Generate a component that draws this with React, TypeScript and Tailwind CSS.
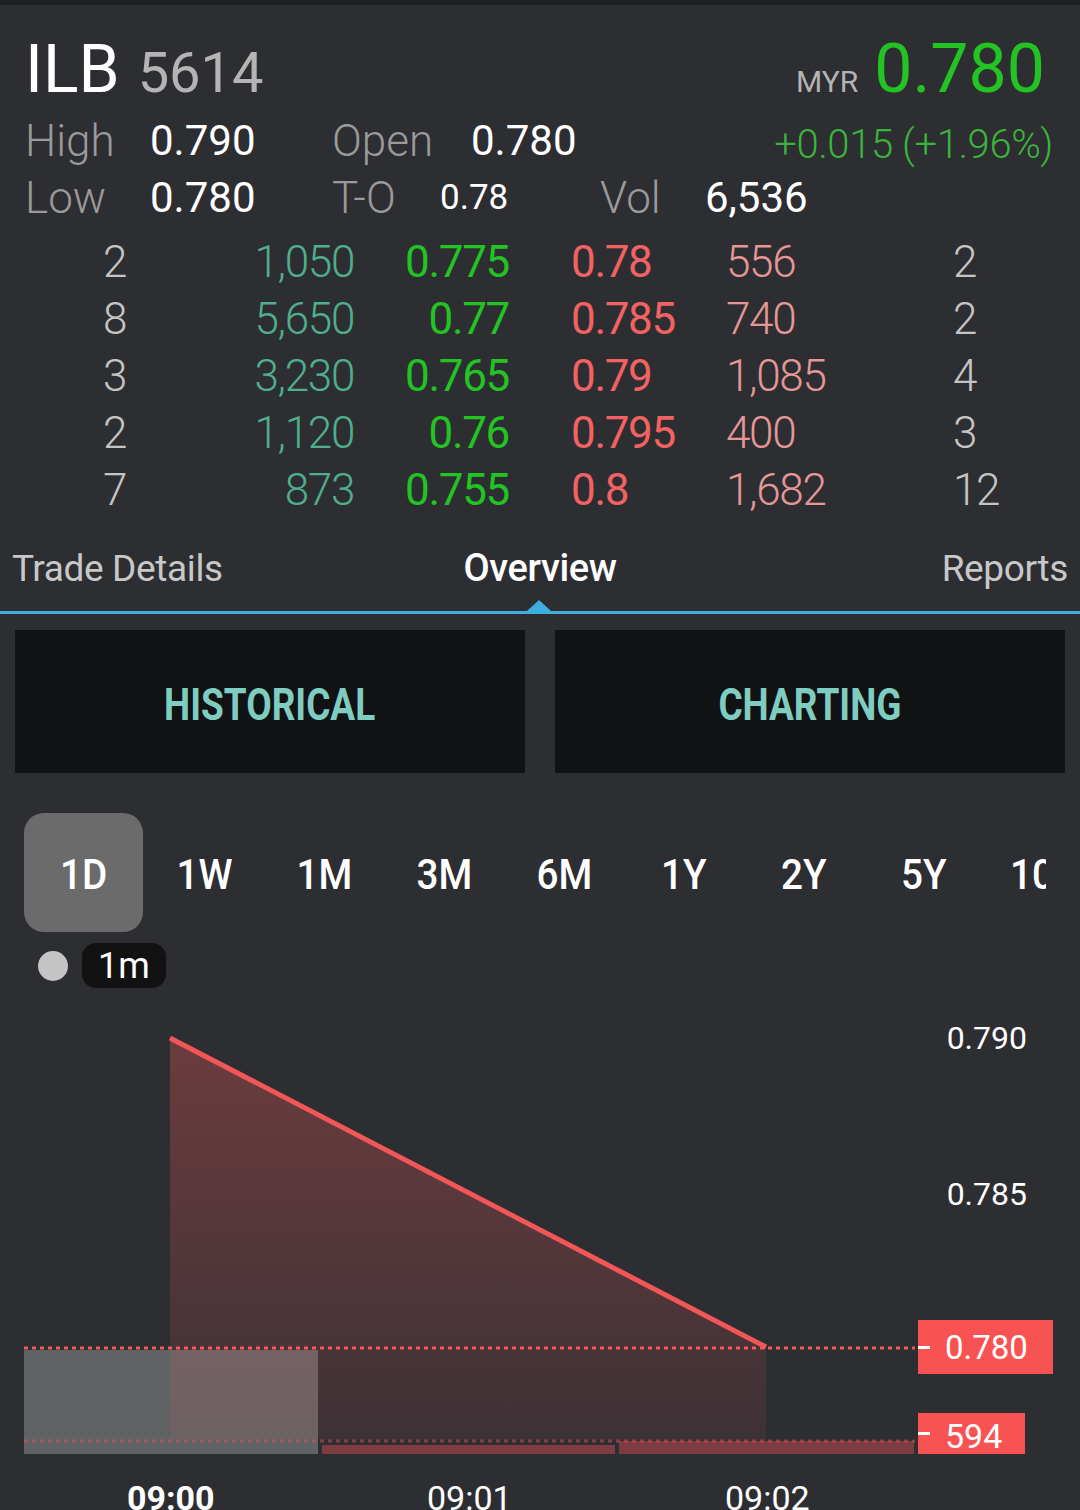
import React from "react"

const font = { fontFamily: "Roboto, 'Noto Sans', sans-serif" }

const book = [
  ["2", "1,050", "0.775", "0.78", "556", "2"],
  ["8", "5,650", "0.77", "0.785", "740", "2"],
  ["3", "3,230", "0.765", "0.79", "1,085", "4"],
  ["2", "1,120", "0.76", "0.795", "400", "3"],
  ["7", "873", "0.755", "0.8", "1,682", "12"],
]

const periods = ["1D", "1W", "1M", "3M", "6M", "1Y", "2Y", "5Y", "10Y"]

function Header() {
  return (
    <div className="pl-[25px] pr-[27px]">
      <div className="flex h-[107px] items-end justify-between pb-[9px] pr-[8px]">
        <div className="flex items-baseline gap-[18px]">
          <span className="text-[66px] leading-none text-white">ILB</span>
          <span className="text-[56px] leading-none text-[#b4b4b4]">5614</span>
        </div>
        <div className="flex items-baseline gap-[16px]">
          <span className="text-[30px] leading-none text-[#b4b4b4]">MYR</span>
          <span className="text-[68px] leading-none text-[#22c322]">0.780</span>
        </div>
      </div>
      <div className="flex h-[57px] items-center">
        <span className="w-[125px] text-[44px] font-light text-[#9a9a9a]">High</span>
        <span className="w-[182px] text-[42px] text-white">0.790</span>
        <span className="w-[139px] text-[44px] font-light text-[#9a9a9a]">Open</span>
        <span className="text-[42px] text-white">0.780</span>
        <span className="ml-auto mt-[8px] text-[40px] font-light tracking-[-0.01em] text-[#3cb43c]">+0.015 (+1.96%)</span>
      </div>
      <div className="flex h-[57px] items-center">
        <span className="w-[125px] text-[44px] font-light text-[#9a9a9a]">Low</span>
        <span className="w-[182px] text-[42px] text-white">0.780</span>
        <span className="w-[108px] text-[44px] font-light text-[#9a9a9a]">T-O</span>
        <span className="mt-[2px] w-[160px] text-[35px] text-white">0.78</span>
        <span className="w-[105px] text-[44px] font-light text-[#9a9a9a]">Vol</span>
        <span className="text-[42px] text-white">6,536</span>
      </div>
    </div>
  )
}

function OrderBook() {
  return (
    <div className="pt-[7px]">
      {book.map((r, i) => (
        <div key={i} className="flex h-[57px] items-center text-[44px] font-light tracking-[-0.03em]">
          <span className="w-[126px] text-right text-[#c4c4c4]">{r[0]}</span>
          <span className="w-[228px] text-right text-[#4fae8c]">{r[1]}</span>
          <span className="w-[155px] text-right font-normal text-[#22c322]">{r[2]}</span>
          <span className="ml-[62px] w-[155px] font-normal text-[#f26262]">{r[3]}</span>
          <span className="w-[227px] text-[#e59696]">{r[4]}</span>
          <span className="text-[#c4c4c4]">{r[5]}</span>
        </div>
      ))}
    </div>
  )
}

function Tabs() {
  return (
    <div>
      <div className="grid h-[93px] grid-cols-3 items-center px-[12px] pt-[8px] text-[37px] tracking-[-0.01em]">
        <span className="text-[#c8c8c8]">Trade Details</span>
        <span className="text-center text-[38px] font-medium text-white">Overview</span>
        <span className="text-right text-[#c8c8c8]">Reports</span>
      </div>
      <div className="relative h-[3px] bg-[#3eaee0]">
        <div className="absolute bottom-[3px] left-[527px] h-0 w-0 border-x-[12px] border-b-[11px] border-x-transparent border-b-[#3eaee0]" />
      </div>
    </div>
  )
}

function Buttons() {
  return (
    <div className="mt-[16px] flex gap-[30px] px-[15px]">
      {["HISTORICAL", "CHARTING"].map((t) => (
        <div key={t} className="flex h-[143px] flex-1 items-center justify-center bg-[#111213] pt-[6px]">
          <span className="inline-block scale-x-[0.84] text-[44px] font-bold text-[#7fccc1]">{t}</span>
        </div>
      ))}
    </div>
  )
}

function Periods() {
  return (
    <div>
      <div className="mt-[40px] flex h-[119px] w-[1046px] overflow-hidden pl-[24px]">
        {periods.map((p, i) => (
          <div
            key={p}
            className={
              i === 0
                ? "mr-[1px] flex w-[119px] shrink-0 items-center justify-center rounded-[20px] bg-[#6b6b6b] pt-[4px]"
                : "flex w-[120px] shrink-0 items-center justify-center pt-[4px]"
            }
          >
            <span className="inline-block scale-x-[0.92] text-[42px] font-medium text-white">{p}</span>
          </div>
        ))}
      </div>
      <div className="mt-[11px] flex h-[45px] items-center gap-[14px] pl-[38px]">
        <div className="h-[30px] w-[30px] rounded-full bg-[#c4c4c4]" />
        <div className="flex h-[45px] items-center rounded-[14px] bg-[#121212] px-[16px] text-[36px] text-white">
          1m
        </div>
      </div>
    </div>
  )
}

function Chart() {
  return (
    <div className="relative h-[522px]">
      <svg className="absolute inset-0" width="1080" height="522" viewBox="0 0 1080 522">
        <defs>
          <linearGradient id="area" x1="0" y1="0" x2="0" y2="1">
            <stop offset="0" stopColor="#f05a5a" stopOpacity="0.32" />
            <stop offset="1" stopColor="#f05a5a" stopOpacity="0.08" />
          </linearGradient>
        </defs>
        <rect x="24" y="362" width="294" height="104" fill="#616264" />
        <rect x="322" y="457" width="293" height="9" fill="#7d3d40" />
        <rect x="619" y="453" width="295" height="13" fill="#7d3d40" />
        <polygon points="170,50 766,359 766,452 170,452" fill="url(#area)" />
        <line x1="24" y1="360" x2="915" y2="360" stroke="#f05a5a" strokeWidth="3" strokeDasharray="4 4" />
        <line x1="24" y1="453" x2="915" y2="453" stroke="#f05a5a" strokeOpacity="0.45" strokeWidth="3" strokeDasharray="4 4" />
        <line x1="170" y1="50" x2="766" y2="359" stroke="#f25656" strokeWidth="5" />
      </svg>

      <span className="absolute right-[53px] top-[30px] text-[32px] leading-[40px] text-white">0.790</span>
      <span className="absolute right-[53px] top-[186px] text-[32px] leading-[40px] text-white">0.785</span>

      <div className="absolute left-[918px] top-[332px] flex h-[54px] w-[135px] items-center bg-[#f75353]">
        <span className="h-[3px] w-[12px] bg-white" />
        <span className="ml-[15px] text-[33px] leading-none text-white">0.780</span>
      </div>
      <div className="absolute left-[918px] top-[425px] flex h-[41px] w-[107px] items-center bg-[#f75353]">
        <span className="h-[3px] w-[12px] bg-white" />
        <span className="ml-[15px] mt-[4px] text-[34px] leading-none text-white">594</span>
      </div>

      <span className="absolute left-[127px] top-[490px] text-[34px] font-bold leading-[40px] text-white">09:00</span>
      <span className="absolute left-[427px] top-[490px] text-[34px] leading-[40px] text-white">09:01</span>
      <span className="absolute left-[725px] top-[490px] text-[34px] leading-[40px] text-white">09:02</span>
    </div>
  )
}

export default function App() {
  return (
    <div className="h-[1510px] w-[1080px] overflow-hidden bg-[#2d2e32]" style={font}>
      <div className="h-[5px] bg-[#1f2022]" />
      <Header />
      <OrderBook />
      <Tabs />
      <Buttons />
      <Periods />
      <Chart />
    </div>
  )
}
